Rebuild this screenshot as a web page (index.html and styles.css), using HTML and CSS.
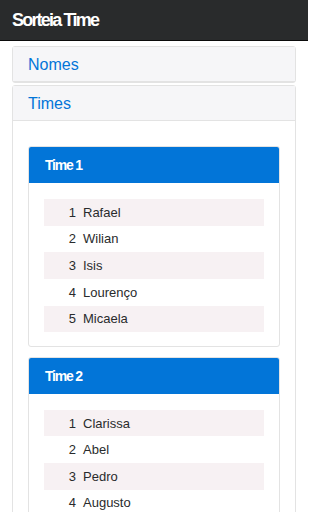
FILE: index.html
```html
<!DOCTYPE html>
<html lang="pt">
<head>
<meta charset="utf-8">
<title>Sorteia Time</title>
<link rel="stylesheet" href="styles.css">
</head>
<body>
<div class="page">
<nav class="navbar"><span class="brand">Sorteia Time</span></nav>
<main class="container">
  <section class="panel">
    <div class="panel-header"><a class="panel-link" href="#">Nomes</a></div>
  </section>
  <section class="panel">
    <div class="panel-header"><a class="panel-link" href="#">Times</a></div>
    <div class="panel-body">
      <div class="team">
        <div class="team-header">Time 1</div>
        <div class="team-body">
          <div class="row"><span class="num">1</span><span class="name">Rafael</span></div>
          <div class="row"><span class="num">2</span><span class="name">Wilian</span></div>
          <div class="row"><span class="num">3</span><span class="name">Isis</span></div>
          <div class="row"><span class="num">4</span><span class="name">Lourenço</span></div>
          <div class="row"><span class="num">5</span><span class="name">Micaela</span></div>
        </div>
      </div>
      <div class="team">
        <div class="team-header">Time 2</div>
        <div class="team-body">
          <div class="row"><span class="num">1</span><span class="name">Clarissa</span></div>
          <div class="row"><span class="num">2</span><span class="name">Abel</span></div>
          <div class="row"><span class="num">3</span><span class="name">Pedro</span></div>
          <div class="row"><span class="num">4</span><span class="name">Augusto</span></div>
        </div>
      </div>
    </div>
  </section>
</main>
</div>
</body>
</html>
```

FILE: styles.css
```css
html, body {
  margin: 0;
  padding: 0;
  background: #fff;
  font-family: "Liberation Sans", Arial, sans-serif;
  color: #292b2c;
}

.page {
  width: 308px;
  overflow: hidden;
}

.navbar {
  height: 40px;
  background: #292b2c;
  border-bottom: 1px solid #0b0b0b;
  padding: 0 12px;
  display: flex;
  align-items: center;
}

.brand {
  color: #fff;
  font-weight: bold;
  font-size: 18px;
  letter-spacing: -1.8px;
  line-height: 40px;
}

.container {
  padding: 5px 12px 0;
  display: flex;
  flex-direction: column;
  gap: 2px;
}

.panel {
  border: 1px solid #e3e3e3;
  border-radius: 3px;
  background: #fff;
}

.panel-header {
  height: 34px;
  padding: 0 15px;
  background: #f6f6f8;
  border-bottom: 1px solid #e3e3e3;
  display: flex;
  align-items: center;
}

.panel-link {
  color: #0275d8;
  text-decoration: none;
  font-size: 16px;
  padding-top: 2px;
}

.panel-body {
  padding: 25px 15px 15px;
  display: flex;
  flex-direction: column;
  gap: 9.4px;
}

.team {
  border: 1px solid #e3e3e3;
  border-radius: 3px;
  overflow: hidden;
}

.team-header {
  height: 36px;
  background: #0275d8;
  color: #fff;
  font-weight: bold;
  font-size: 14px;
  letter-spacing: -1.2px;
  padding: 0 16px;
  display: flex;
  align-items: center;
}

.team-body {
  padding: 16px 15px 14px;
}

.row {
  height: 26.67px;
  display: grid;
  grid-template-columns: 32px 1fr;
  column-gap: 7px;
  align-items: center;
  font-size: 13px;
}

.row:nth-child(odd) {
  background: #f7f1f3;
}

.num {
  text-align: right;
}
```
